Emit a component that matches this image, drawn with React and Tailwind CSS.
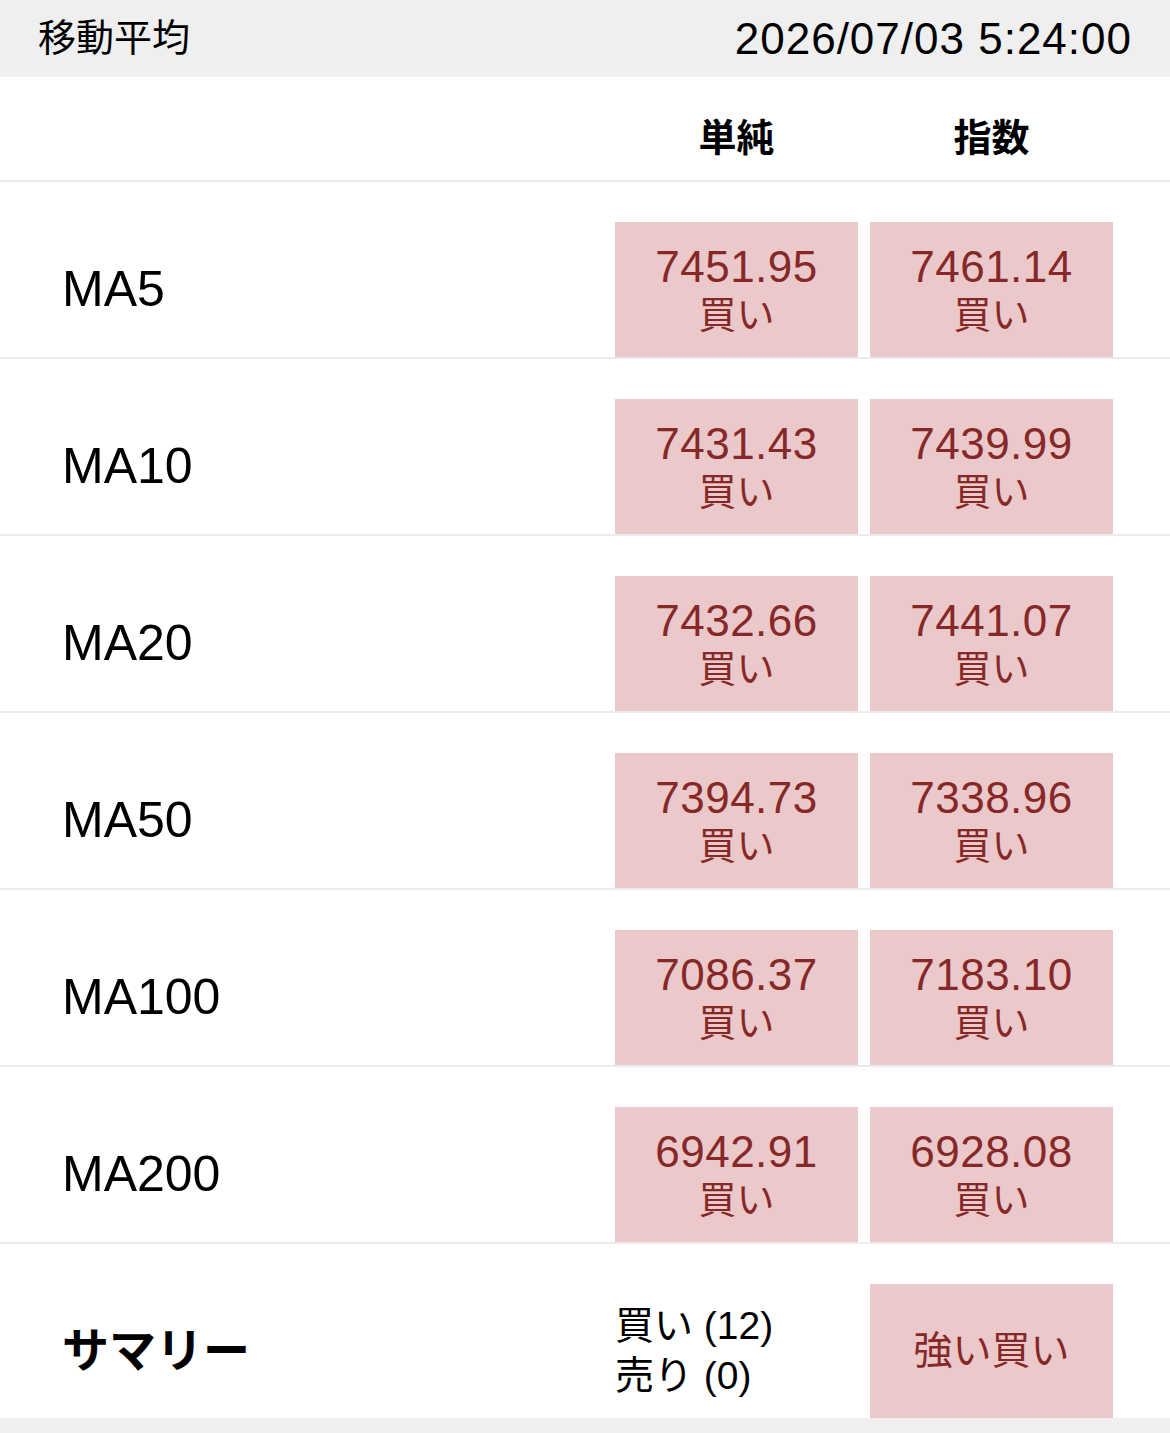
import React from "react";

const rows = [
  { name: "MA5", simple: "7451.95", exp: "7461.14" },
  { name: "MA10", simple: "7431.43", exp: "7439.99" },
  { name: "MA20", simple: "7432.66", exp: "7441.07" },
  { name: "MA50", simple: "7394.73", exp: "7338.96" },
  { name: "MA100", simple: "7086.37", exp: "7183.10" },
  { name: "MA200", simple: "6942.91", exp: "6928.08" },
];

const font = {
  fontFamily: '"Liberation Sans", "Noto Sans CJK JP", sans-serif',
};

const Cell = ({ value, label }) => (
  <div className="w-[243px] h-[135px] bg-[#ebc8c9] text-[#872828] flex flex-col items-center justify-center">
    <div className="text-[44px] leading-[50px] tracking-[0.5px]">{value}</div>
    <div className="text-[38px] leading-[46px]">{label}</div>
  </div>
);

const App = () => {
  return (
    <div className="w-[1170px] min-h-[1433px] bg-white text-black" style={font}>
      {/* header */}
      <div className="h-[77px] bg-[#efefef] flex items-center justify-between pl-[38px] pr-[38px]">
        <span className="text-[38px]">移動平均</span>
        <span className="text-[44px] tracking-[1px]">2026/07/03 5:24:00</span>
      </div>

      {/* column titles */}
      <div className="h-[105px] flex items-center pt-[20px] border-b-2 border-[#ececec]">
        <div className="w-[615px]" />
        <div className="w-[243px] text-center text-[38px] font-semibold">単純</div>
        <div className="w-[12px]" />
        <div className="w-[243px] text-center text-[38px] font-semibold">指数</div>
      </div>

      {rows.map((r) => (
        <div key={r.name} className="flex items-center pt-[40px] border-b-2 border-[#ececec]">
          <div className="w-[615px] pl-[62px] text-[50px]">{r.name}</div>
          <div className="flex gap-[12px]">
            <Cell value={r.simple} label="買い" />
            <Cell value={r.exp} label="買い" />
          </div>
        </div>
      ))}

      {/* summary */}
      <div className="flex items-center pt-[40px]">
        <div className="w-[615px] pl-[62px] text-[47px] font-bold">サマリー</div>
        <div className="w-[255px] text-[39px] leading-[50px]">
          <div>買い (12)</div>
          <div>売り (0)</div>
        </div>
        <div className="w-[243px] h-[134px] bg-[#ebc8c9] text-[#872828] flex items-center justify-center text-[39px]">
          強い買い
        </div>
      </div>
      <div className="h-[15px] bg-[#efefef]" />
    </div>
  );
};

export default App;
